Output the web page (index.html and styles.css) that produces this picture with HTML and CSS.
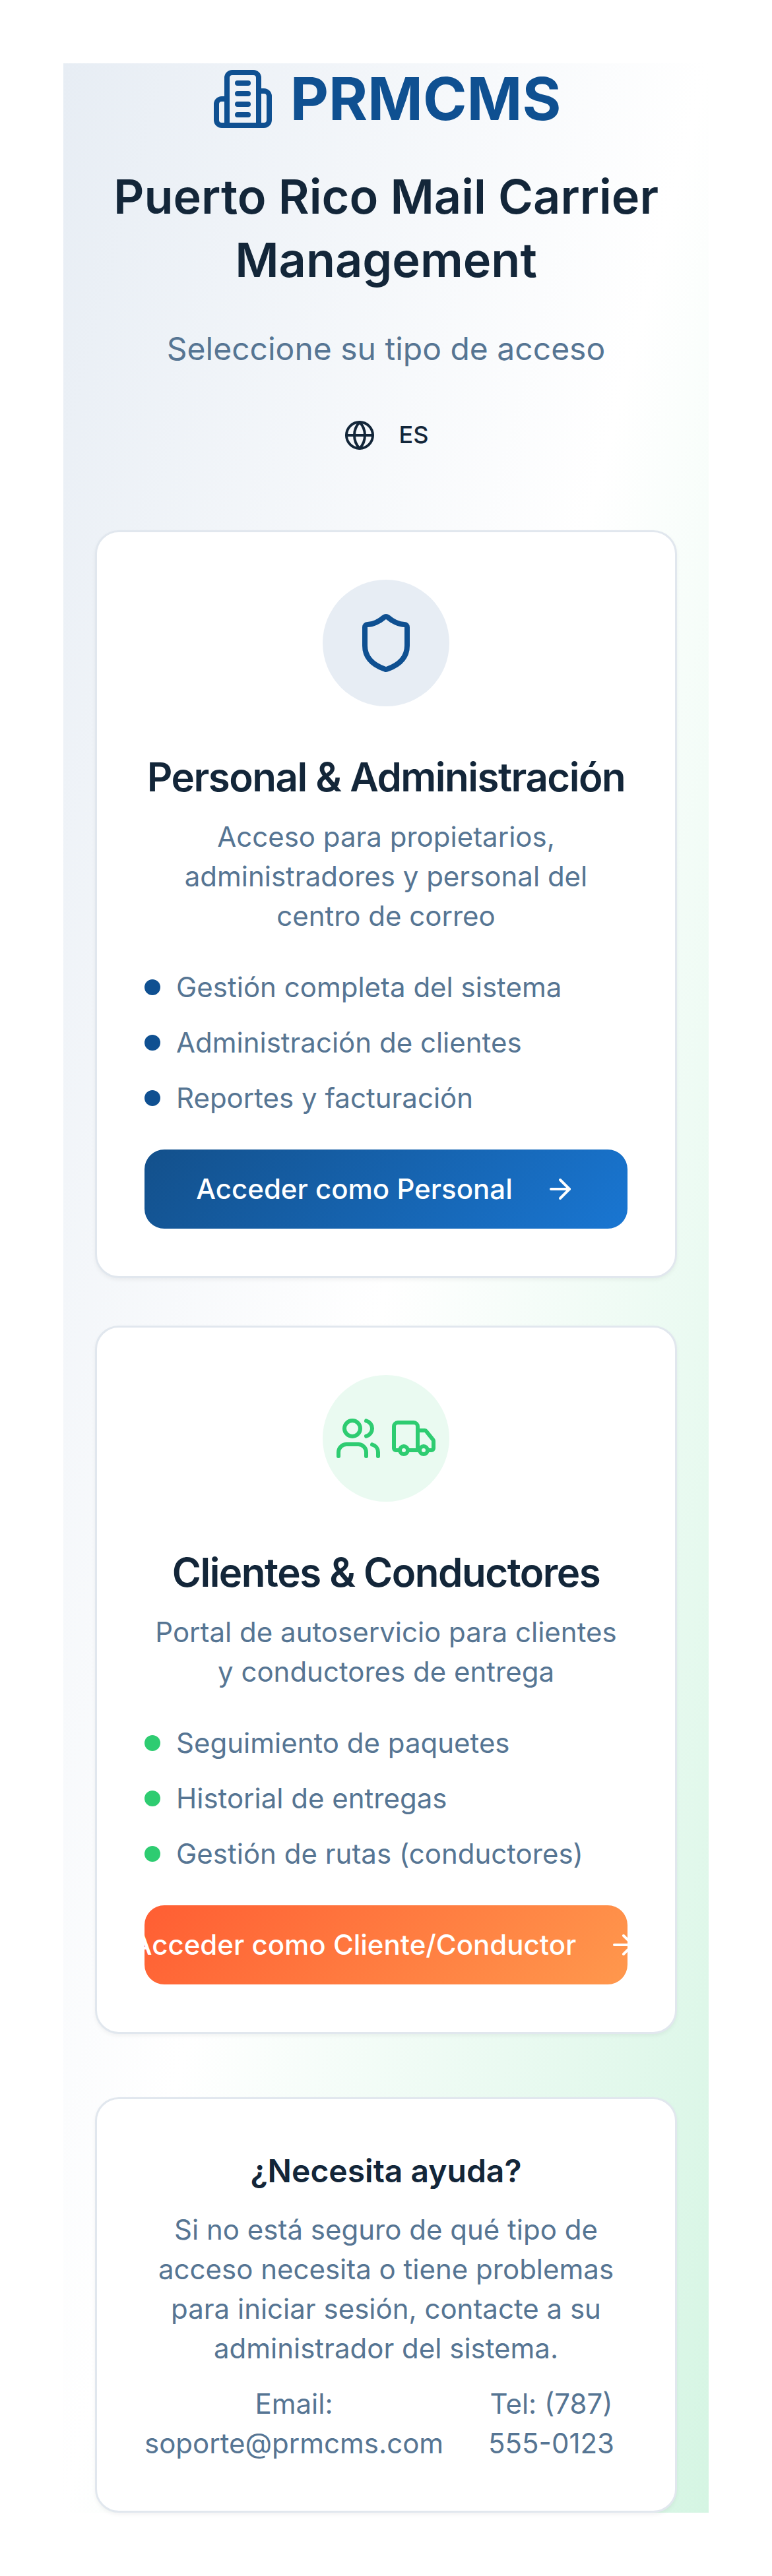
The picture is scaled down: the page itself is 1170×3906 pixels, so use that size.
FILE: index.html
```html
<!DOCTYPE html>
<html lang="es">
<head>
<meta charset="utf-8">
<title>PRMCMS</title>
<link rel="stylesheet" href="styles.css">
</head>
<body>
<main class="page">
  <header class="header">
    <div class="brand">
      <svg class="icon icon-lg" viewBox="0 0 24 24"><path d="M6 22V4a2 2 0 0 1 2-2h8a2 2 0 0 1 2 2v18Z"/><path d="M6 12H4a2 2 0 0 0-2 2v6a2 2 0 0 0 2 2h2"/><path d="M18 9h2a2 2 0 0 1 2 2v9a2 2 0 0 1-2 2h-2"/><path d="M10 6h4"/><path d="M10 10h4"/><path d="M10 14h4"/><path d="M10 18h4"/></svg>
      <h1 class="brand-name">PRMCMS</h1>
    </div>
    <h2 class="title">Puerto Rico Mail Carrier Management</h2>
    <p class="subtitle">Seleccione su tipo de acceso</p>
    <button class="lang" type="button">
      <svg class="icon icon-sm" viewBox="0 0 24 24"><circle cx="12" cy="12" r="10"/><path d="M12 2a14.5 14.5 0 0 0 0 20 14.5 14.5 0 0 0 0-20"/><path d="M2 12h20"/></svg>
      <span class="lang-code">ES</span>
    </button>
  </header>

  <div class="options">
    <section class="card staff">
      <div class="badge">
        <svg class="icon icon-lg" viewBox="0 0 24 24"><path d="M20 13c0 5-3.5 7.5-7.66 8.95a1 1 0 0 1-.67-.01C7.5 20.5 4 18 4 13V6a1 1 0 0 1 1-1c2 0 4.5-1.2 6.24-2.72a1.17 1.17 0 0 1 1.52 0C14.51 3.81 17 5 19 5a1 1 0 0 1 1 1z"/></svg>
      </div>
      <h3 class="card-title">Personal &amp; Administración</h3>
      <p class="card-text">Acceso para propietarios, administradores y personal del centro de correo</p>
      <ul class="features">
        <li>Gestión completa del sistema</li>
        <li>Administración de clientes</li>
        <li>Reportes y facturación</li>
      </ul>
      <button class="action" type="button">
        Acceder como Personal
        <svg class="icon icon-sm" viewBox="0 0 24 24"><path d="M5 12h14"/><path d="m12 5 7 7-7 7"/></svg>
      </button>
    </section>

    <section class="card customer">
      <div class="badge">
        <svg class="icon icon-md" viewBox="0 0 24 24"><path d="M16 21v-2a4 4 0 0 0-4-4H6a4 4 0 0 0-4 4v2"/><circle cx="9" cy="7" r="4"/><path d="M22 21v-2a4 4 0 0 0-3-3.87"/><path d="M16 3.13a4 4 0 0 1 0 7.75"/></svg>
        <svg class="icon icon-md" viewBox="0 0 24 24"><path d="M14 18V6a2 2 0 0 0-2-2H4a2 2 0 0 0-2 2v11a1 1 0 0 0 1 1h2"/><path d="M15 18H9"/><path d="M19 18h2a1 1 0 0 0 1-1v-3.65a1 1 0 0 0-.22-.624l-3.48-4.35A1 1 0 0 0 17.52 8H14"/><circle cx="17" cy="18" r="2"/><circle cx="7" cy="18" r="2"/></svg>
      </div>
      <h3 class="card-title">Clientes &amp; Conductores</h3>
      <p class="card-text">Portal de autoservicio para clientes y conductores de entrega</p>
      <ul class="features">
        <li>Seguimiento de paquetes</li>
        <li>Historial de entregas</li>
        <li>Gestión de rutas (conductores)</li>
      </ul>
      <button class="action" type="button">
        Acceder como Cliente/Conductor
        <svg class="icon icon-sm" viewBox="0 0 24 24"><path d="M5 12h14"/><path d="m12 5 7 7-7 7"/></svg>
      </button>
    </section>
  </div>

  <section class="card help">
    <h3 class="help-title">¿Necesita ayuda?</h3>
    <p class="card-text">Si no está seguro de qué tipo de acceso necesita o tiene problemas para iniciar sesión, contacte a su administrador del sistema.</p>
    <div class="contact">
      <span>Email: soporte@prmcms.com</span>
      <span>Tel: (787) 555-0123</span>
    </div>
  </section>
</main>
</body>
</html>
```
FILE: styles.css
```css
:root {
  --primary: #0f5091;
  --green: #2ecc71;
  --ink: #132639;
  --muted: #567593;
  --border: #e1e7ee;
}

* { box-sizing: border-box; margin: 0; padding: 0; }

body {
  padding: 96px;
  background: #fff;
  color: var(--ink);
  font-family: Inter, "Liberation Sans", sans-serif;
}

.page {
  padding: 0 48px;
  background: linear-gradient(to bottom right, #e7edf4, #fff, #d5f5e3);
}

.icon {
  flex: none;
  fill: none;
  stroke: currentColor;
  stroke-width: 2;
  stroke-linecap: round;
  stroke-linejoin: round;
}
.icon-sm { width: 48px; height: 48px; }
.icon-md { width: 72px; height: 72px; }
.icon-lg { width: 96px; height: 96px; }

.header {
  display: flex;
  flex-direction: column;
  align-items: center;
  gap: 48px;
  margin-bottom: 96px;
  text-align: center;
}
.brand {
  display: flex;
  align-items: center;
  gap: 24px;
  color: var(--primary);
}
.brand-name { font-size: 90px; line-height: 108px; font-weight: 700; }
.title { margin: -2px 0 2px; font-size: 72px; line-height: 96px; font-weight: 600; }
.subtitle { margin: 1px 0 -1px; color: var(--muted); font-size: 48px; line-height: 72px; }

button { border: 0; font-family: inherit; font-weight: 500; white-space: nowrap; }

.lang {
  display: flex;
  align-items: center;
  gap: 36px;
  height: 96px;
  padding: 0 36px;
  background: none;
  color: var(--ink);
  font-size: 36px;
}
.lang-code { padding-bottom: 2px; }

.options { display: grid; gap: 72px; margin-bottom: 96px; }

.card {
  display: flex;
  flex-direction: column;
  min-width: 0;
  padding: 72px;
  border: 3px solid var(--border);
  border-radius: 36px;
  background: #fff;
  box-shadow: 0 3px 6px rgba(0, 0, 0, .05);
  text-align: center;
}
.badge {
  display: flex;
  align-items: center;
  align-self: center;
  justify-content: center;
  gap: 12px;
  width: 192px;
  height: 192px;
  margin-bottom: 65px;
  border-radius: 50%;
}
.staff .badge { background: #e7edf4; color: var(--primary); }
.customer .badge { background: #eafaf1; color: var(--green); }

.card-title {
  margin-bottom: 19px;
  font-size: 60px;
  line-height: 84px;
  font-weight: 600;
  letter-spacing: -0.025em;
  white-space: nowrap;
}
.card-text { color: var(--muted); font-size: 42px; line-height: 60px; }

.features {
  display: grid;
  gap: 24px;
  margin: 48px 0;
  list-style: none;
  color: var(--muted);
  font-size: 42px;
  line-height: 60px;
  text-align: left;
}
.features li { display: flex; align-items: center; gap: 24px; }
.features li::before {
  content: "";
  width: 24px;
  height: 24px;
  border-radius: 50%;
  background: var(--primary);
}
.customer .features li::before { background: var(--green); }

.action {
  display: flex;
  align-items: center;
  justify-content: center;
  gap: 48px;
  height: 120px;
  border-radius: 30px;
  overflow: hidden;
  color: #fff;
  font-size: 42px;
  line-height: 60px;
}
.staff .action { background: linear-gradient(135deg, #13508b, #1976d2); }
.customer .action { background: linear-gradient(135deg, #ff5e33, #ff984d); }

.help-title { margin: 1px 0 23px; font-size: 48px; line-height: 72px; font-weight: 600; }
.contact {
  display: flex;
  justify-content: center;
  gap: 48px;
  margin-top: 24px;
  color: var(--muted);
  font-size: 42px;
  line-height: 60px;
}
```
